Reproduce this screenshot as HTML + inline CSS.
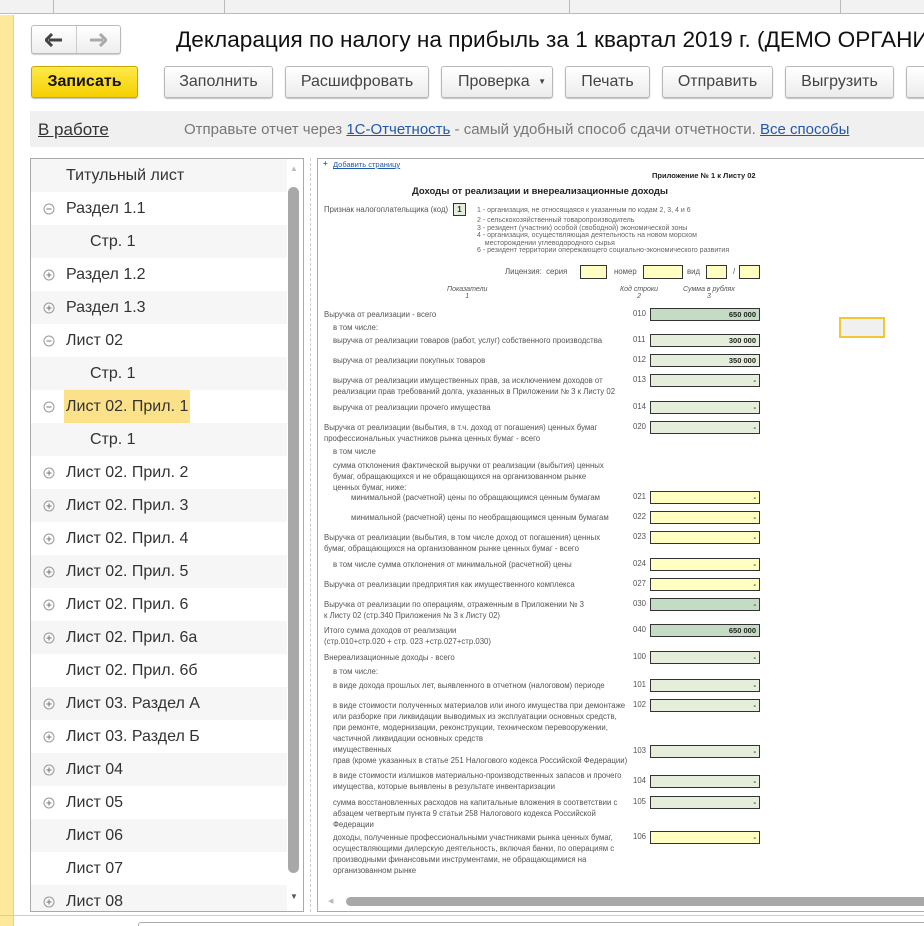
<!DOCTYPE html>
<html><head><meta charset="utf-8"><style>
*{box-sizing:border-box;margin:0;padding:0}
html,body{width:924px;height:926px;overflow:hidden}
body{background:#fff;font-family:"Liberation Sans",Arial,sans-serif;color:#333}
#w{position:relative;width:924px;height:926px;overflow:hidden}
.a{position:absolute}
.btn{position:absolute;top:66px;height:32px;border:1px solid #b8b8b8;border-radius:3px;background:linear-gradient(#fff,#ececec);box-shadow:0 1px 1px rgba(0,0,0,.25);font-size:16px;color:#444;text-align:center;line-height:30px;white-space:nowrap}
.row{position:absolute;left:31px;width:256px;height:33px;font-size:16px;color:#333;line-height:33px;white-space:nowrap}
.row.g{background:#f6f6f6}
.ic{position:absolute;left:12px;top:11px;width:12px;height:12px}
.f{font-size:7.8px;color:#555;line-height:11px;position:absolute;white-space:nowrap}
.c{position:absolute;left:633px;font-size:7.8px;color:#555}
.fld{position:absolute;left:650px;width:110px;height:13px;border:1px solid #333;font-size:7.5px;text-align:right;padding-right:3px;line-height:11px;color:#222;font-weight:bold}
.dg{background:#c3dcc3}.lg{background:#e5eedb}.y{background:#ffffc2}
</style></head><body><div id="w">
<svg width="0" height="0" style="position:absolute"><defs>
<symbol id="m" viewBox="0 0 12 12"><circle cx="6" cy="6" r="5" fill="none" stroke="#999"/><path d="M3.5 6h5" stroke="#777"/></symbol>
<symbol id="p" viewBox="0 0 12 12"><circle cx="6" cy="6" r="5" fill="none" stroke="#999"/><path d="M3.5 6h5M6 3.5v5" stroke="#777"/></symbol>
</defs></svg>
<!-- top tabs -->
<div class="a" style="left:0;top:0;width:924px;height:14px;background:#f2f2f2;border-bottom:1px solid #bbb"></div>
<div class="a" style="left:53px;top:0;width:1px;height:14px;background:#bbb"></div>
<div class="a" style="left:224px;top:0;width:1px;height:14px;background:#bbb"></div>
<div class="a" style="left:569px;top:0;width:1px;height:14px;background:#bbb"></div>
<div class="a" style="left:840px;top:0;width:1px;height:14px;background:#bbb"></div>
<div class="a" style="left:0;top:15px;width:14px;height:911px;background:#fce99c;border-right:1px solid #e8d27a"></div>
<!-- nav -->
<div class="a" style="left:31px;top:25px;width:90px;height:29px;border:1px solid #bbb;border-radius:3px;background:linear-gradient(#fff,#eee);box-shadow:0 1px 1px rgba(0,0,0,.2)"></div>
<div class="a" style="left:76px;top:26px;width:1px;height:27px;background:#ccc"></div>
<svg class="a" style="left:45px;top:33px" width="18" height="14" viewBox="0 0 18 14"><path d="M17 7H4" stroke="#444" stroke-width="3"/><path d="M7 1L1 7l6 6" fill="none" stroke="#444" stroke-width="3"/></svg>
<svg class="a" style="left:89px;top:33px" width="18" height="14" viewBox="0 0 18 14"><path d="M1 7h13" stroke="#aaa" stroke-width="3"/><path d="M11 1l6 6-6 6" fill="none" stroke="#aaa" stroke-width="3"/></svg>
<div class="a" style="left:176px;top:27px;font-size:22.6px;color:#111;white-space:nowrap">Декларация по налогу на прибыль за 1 квартал 2019 г. (ДЕМО ОРГАНИЗАЦИЯ)</div>
<!-- buttons -->
<div class="btn" style="left:31px;width:107px;background:linear-gradient(#ffe94a,#f5d000);border-color:#c9a800;color:#111;font-weight:bold">Записать</div>
<div class="btn" style="left:164px;width:109px">Заполнить</div>
<div class="btn" style="left:285px;width:144px">Расшифровать</div>
<div class="btn" style="left:441px;width:112px;text-align:left;padding-left:16px">Проверка <span style="font-size:8px;position:absolute;right:6px">▼</span></div>
<div class="btn" style="left:565px;width:85px">Печать</div>
<div class="btn" style="left:662px;width:111px">Отправить</div>
<div class="btn" style="left:785px;width:109px">Выгрузить</div>
<div class="btn" style="left:906px;width:40px"></div>
<!-- info -->
<div class="a" style="left:30px;top:111px;width:894px;height:36px;background:#f0f0f0"></div>
<div class="a" style="left:38px;top:120px;font-size:17px;color:#333;text-decoration:underline">В работе</div>
<div class="a" style="left:184px;top:121px;font-size:15px;color:#777;white-space:nowrap">Отправьте отчет через <span style="color:#2358a8;text-decoration:underline">1С-Отчетность</span> - самый удобный способ сдачи отчетности. <span style="color:#2358a8;text-decoration:underline">Все способы</span></div>
<!-- tree -->
<div class="a" style="left:30px;top:158px;width:274px;height:754px;border:1px solid #aaa;overflow:hidden">
<div class="a" style="left:257px;top:28px;width:11px;height:686px;background:#a8a8a8;border-radius:6px"></div>
<div class="a" style="left:259px;top:5px;font-size:8px;color:#bbb">▲</div>
<div class="a" style="left:259px;top:733px;font-size:8px;color:#555">▼</div>
</div>
<div class="row g" style="top:159px"><span style="margin-left:35px">Титульный лист</span></div>
<div class="row" style="top:192px"><svg class="ic"><use href="#m"/></svg><span style="margin-left:35px">Раздел 1.1</span></div>
<div class="row g" style="top:225px"><span style="margin-left:59px">Стр. 1</span></div>
<div class="row" style="top:258px"><svg class="ic"><use href="#p"/></svg><span style="margin-left:35px">Раздел 1.2</span></div>
<div class="row g" style="top:291px"><svg class="ic"><use href="#p"/></svg><span style="margin-left:35px">Раздел 1.3</span></div>
<div class="row" style="top:324px"><svg class="ic"><use href="#m"/></svg><span style="margin-left:35px">Лист 02</span></div>
<div class="row g" style="top:357px"><span style="margin-left:59px">Стр. 1</span></div>
<div class="row" style="top:390px"><svg class="ic"><use href="#m"/></svg><span style="margin-left:33px;padding:0 2px;background:#fbe18a;display:inline-block;height:33px">Лист 02. Прил. 1</span></div>
<div class="row g" style="top:423px"><span style="margin-left:59px">Стр. 1</span></div>
<div class="row" style="top:456px"><svg class="ic"><use href="#p"/></svg><span style="margin-left:35px">Лист 02. Прил. 2</span></div>
<div class="row g" style="top:489px"><svg class="ic"><use href="#p"/></svg><span style="margin-left:35px">Лист 02. Прил. 3</span></div>
<div class="row" style="top:522px"><svg class="ic"><use href="#p"/></svg><span style="margin-left:35px">Лист 02. Прил. 4</span></div>
<div class="row g" style="top:555px"><svg class="ic"><use href="#p"/></svg><span style="margin-left:35px">Лист 02. Прил. 5</span></div>
<div class="row" style="top:588px"><svg class="ic"><use href="#p"/></svg><span style="margin-left:35px">Лист 02. Прил. 6</span></div>
<div class="row g" style="top:621px"><svg class="ic"><use href="#p"/></svg><span style="margin-left:35px">Лист 02. Прил. 6а</span></div>
<div class="row" style="top:654px"><span style="margin-left:35px">Лист 02. Прил. 6б</span></div>
<div class="row g" style="top:687px"><svg class="ic"><use href="#p"/></svg><span style="margin-left:35px">Лист 03. Раздел А</span></div>
<div class="row" style="top:720px"><svg class="ic"><use href="#p"/></svg><span style="margin-left:35px">Лист 03. Раздел Б</span></div>
<div class="row g" style="top:753px"><svg class="ic"><use href="#p"/></svg><span style="margin-left:35px">Лист 04</span></div>
<div class="row" style="top:786px"><svg class="ic"><use href="#p"/></svg><span style="margin-left:35px">Лист 05</span></div>
<div class="row g" style="top:819px"><span style="margin-left:35px">Лист 06</span></div>
<div class="row" style="top:852px"><span style="margin-left:35px">Лист 07</span></div>
<div class="row g" style="top:885px;height:26px;overflow:hidden"><svg class="ic"><use href="#p"/></svg><span style="margin-left:35px">Лист 08</span></div>
<!-- splitter -->
<div class="a" style="left:310px;top:158px;width:0;height:754px;border-left:1px dashed #ccc"></div>
<!-- form panel -->
<div class="a" style="left:317px;top:158px;width:620px;height:754px;border:1px solid #aaa"></div>
<div class="a" style="left:323px;top:159px;font-size:8px;color:#2a8a2a;font-weight:bold">+</div>
<div class="a" style="left:333px;top:160px;font-size:7.5px;color:#2358a8;text-decoration:underline">Добавить страницу</div>
<div class="a" style="left:652px;top:171px;font-size:7.5px;color:#222;font-weight:bold">Приложение № 1 к Листу 02</div>
<div class="a" style="left:412px;top:186px;font-size:9.5px;color:#222;font-weight:bold">Доходы от реализации и внереализационные доходы</div>
<div class="f" style="left:324px;top:204px">Признак налогоплательщика (код)</div>
<div class="a" style="left:453px;top:203px;width:13px;height:13px;border:1px solid #333;background:#e5eedb;font-size:8px;text-align:center;line-height:11px;font-weight:bold">1</div>
<div class="f" style="left:477px;top:207px;font-size:7px;line-height:7.5px;color:#666">1 - организация, не относящаяся к указанным по кодам 2, 3, 4 и 6</div>
<div class="f" style="left:477px;top:217px;font-size:7px;line-height:7.5px;color:#666">2 - сельскохозяйственный товаропроизводитель<br>3 - резидент (участник) особой (свободной) экономической зоны<br>4 - организация, осуществляющая деятельность на новом морском<br>&nbsp;&nbsp;&nbsp;&nbsp;месторождении углеводородного сырья<br>6 - резидент территории опережающего социально-экономического развития</div>
<div class="f" style="left:505px;top:266px">Лицензия:&nbsp; серия</div>
<div class="a y" style="left:580px;top:265px;width:27px;height:14px;border:1px solid #333"></div>
<div class="f" style="left:614px;top:266px">номер</div>
<div class="a y" style="left:643px;top:265px;width:40px;height:14px;border:1px solid #333"></div>
<div class="f" style="left:687px;top:266px">вид</div>
<div class="a y" style="left:706px;top:265px;width:21px;height:14px;border:1px solid #333"></div>
<div class="f" style="left:733px;top:266px">/</div>
<div class="a y" style="left:739px;top:265px;width:21px;height:14px;border:1px solid #333"></div>
<div class="f" style="left:447px;top:286px;font-style:italic;text-align:center;line-height:7px;font-size:7px">Показатели<br>1</div>
<div class="f" style="left:620px;top:286px;font-style:italic;text-align:center;line-height:7px;font-size:7px">Код строки<br>2</div>
<div class="f" style="left:683px;top:286px;font-style:italic;text-align:center;line-height:7px;font-size:7px">Сумма в рублях<br>3</div>

<div class="f" style="left:324px;top:309px">Выручка от реализации - всего</div>
<div class="f" style="left:333px;top:322px">в том числе:</div>
<div class="f" style="left:333px;top:335px">выручка от реализации товаров (работ, услуг) собственного производства</div>
<div class="f" style="left:333px;top:355px">выручка от реализации покупных товаров</div>
<div class="f" style="left:333px;top:375px">выручка от реализации имущественных прав, за исключением доходов от<br>реализации прав требований долга, указанных в Приложении № 3 к Листу 02</div>
<div class="f" style="left:333px;top:402px">выручка от реализации прочего имущества</div>
<div class="f" style="left:324px;top:422px">Выручка от реализации (выбытия, в т.ч. доход от погашения) ценных бумаг<br>профессиональных участников рынка ценных бумаг - всего</div>
<div class="f" style="left:333px;top:446px">в том числе</div>
<div class="f" style="left:333px;top:460px">сумма отклонения фактической выручки от реализации (выбытия) ценных<br>бумаг, обращающихся и не обращающихся на организованном рынке<br>ценных бумаг, ниже:</div>
<div class="f" style="left:351px;top:492px">минимальной (расчетной) цены по обращающимся ценным бумагам</div>
<div class="f" style="left:351px;top:512px">минимальной (расчетной) цены по необращающимся ценным бумагам</div>
<div class="f" style="left:324px;top:532px">Выручка от реализации (выбытия, в том числе доход от погашения) ценных<br>бумаг, обращающихся на организованном рынке ценных бумаг - всего</div>
<div class="f" style="left:333px;top:559px">в том числе сумма отклонения от минимальной (расчетной) цены</div>
<div class="f" style="left:324px;top:579px">Выручка от реализации предприятия как имущественного комплекса</div>
<div class="f" style="left:324px;top:599px">Выручка от реализации по операциям, отраженным в Приложении № 3<br>к Листу 02 (стр.340 Приложения № 3 к Листу 02)</div>
<div class="f" style="left:324px;top:625px">Итого сумма доходов от реализации<br>(стр.010+стр.020 + стр. 023 +стр.027+стр.030)</div>
<div class="f" style="left:324px;top:652px">Внереализационные доходы - всего</div>
<div class="f" style="left:333px;top:666px">в том числе:</div>
<div class="f" style="left:333px;top:680px">в виде дохода прошлых лет, выявленного в отчетном (налоговом) периоде</div>
<div class="f" style="left:333px;top:700px">в виде стоимости полученных материалов или иного имущества при демонтаже<br>или разборке при ликвидации выводимых из эксплуатации основных средств,<br>при ремонте, модернизации, реконструкции, техническом перевооружении,<br>частичной ликвидации основных средств</div>
<div class="f" style="left:333px;top:744px">имущественных<br>прав (кроме указанных в статье 251 Налогового кодекса Российской Федерации)</div>
<div class="f" style="left:333px;top:770px">в виде стоимости излишков материально-производственных запасов и прочего<br>имущества, которые выявлены в результате инвентаризации</div>
<div class="f" style="left:333px;top:797px">сумма восстановленных расходов на капитальные вложения в соответствии с<br>абзацем четвертым пункта 9 статьи 258 Налогового кодекса Российской<br>Федерации</div>
<div class="f" style="left:333px;top:832px">доходы, полученные профессиональными участниками рынка ценных бумаг,<br>осуществляющими дилерскую деятельность, включая банки, по операциям с<br>производными финансовыми инструментами, не обращающимися на<br>организованном рынке</div>

<div class="c" style="top:309px">010</div><div class="fld dg" style="top:308px">650 000</div>
<div class="c" style="top:335px">011</div><div class="fld lg" style="top:334px">300 000</div>
<div class="c" style="top:355px">012</div><div class="fld lg" style="top:354px">350 000</div>
<div class="c" style="top:375px">013</div><div class="fld lg" style="top:374px">-</div>
<div class="c" style="top:402px">014</div><div class="fld lg" style="top:401px">-</div>
<div class="c" style="top:422px">020</div><div class="fld lg" style="top:421px">-</div>
<div class="c" style="top:492px">021</div><div class="fld y" style="top:491px">-</div>
<div class="c" style="top:512px">022</div><div class="fld y" style="top:511px">-</div>
<div class="c" style="top:532px">023</div><div class="fld y" style="top:531px">-</div>
<div class="c" style="top:559px">024</div><div class="fld y" style="top:558px">-</div>
<div class="c" style="top:579px">027</div><div class="fld y" style="top:578px">-</div>
<div class="c" style="top:599px">030</div><div class="fld dg" style="top:598px">-</div>
<div class="c" style="top:625px">040</div><div class="fld dg" style="top:624px">650 000</div>
<div class="c" style="top:652px">100</div><div class="fld lg" style="top:651px">-</div>
<div class="c" style="top:680px">101</div><div class="fld lg" style="top:679px">-</div>
<div class="c" style="top:700px">102</div><div class="fld lg" style="top:699px">-</div>
<div class="c" style="top:746px">103</div><div class="fld lg" style="top:745px">-</div>
<div class="c" style="top:776px">104</div><div class="fld lg" style="top:775px">-</div>
<div class="c" style="top:797px">105</div><div class="fld lg" style="top:796px">-</div>
<div class="c" style="top:832px">106</div><div class="fld y" style="top:831px">-</div>

<div class="a" style="left:839px;top:317px;width:46px;height:21px;border:2px solid #f0c832;background:#f0f0f0"></div>
<div class="a" style="left:328px;top:897px;font-size:7px;color:#bbb">◀</div>
<div class="a" style="left:346px;top:897px;width:600px;height:9px;background:#a8a8a8;border-radius:5px"></div>
<div class="a" style="left:0;top:915px;width:924px;height:1px;background:#ccc"></div>
<div class="a" style="left:138px;top:922px;width:800px;height:10px;border:1px solid #aaa;border-radius:3px"></div>
</div></body></html>
